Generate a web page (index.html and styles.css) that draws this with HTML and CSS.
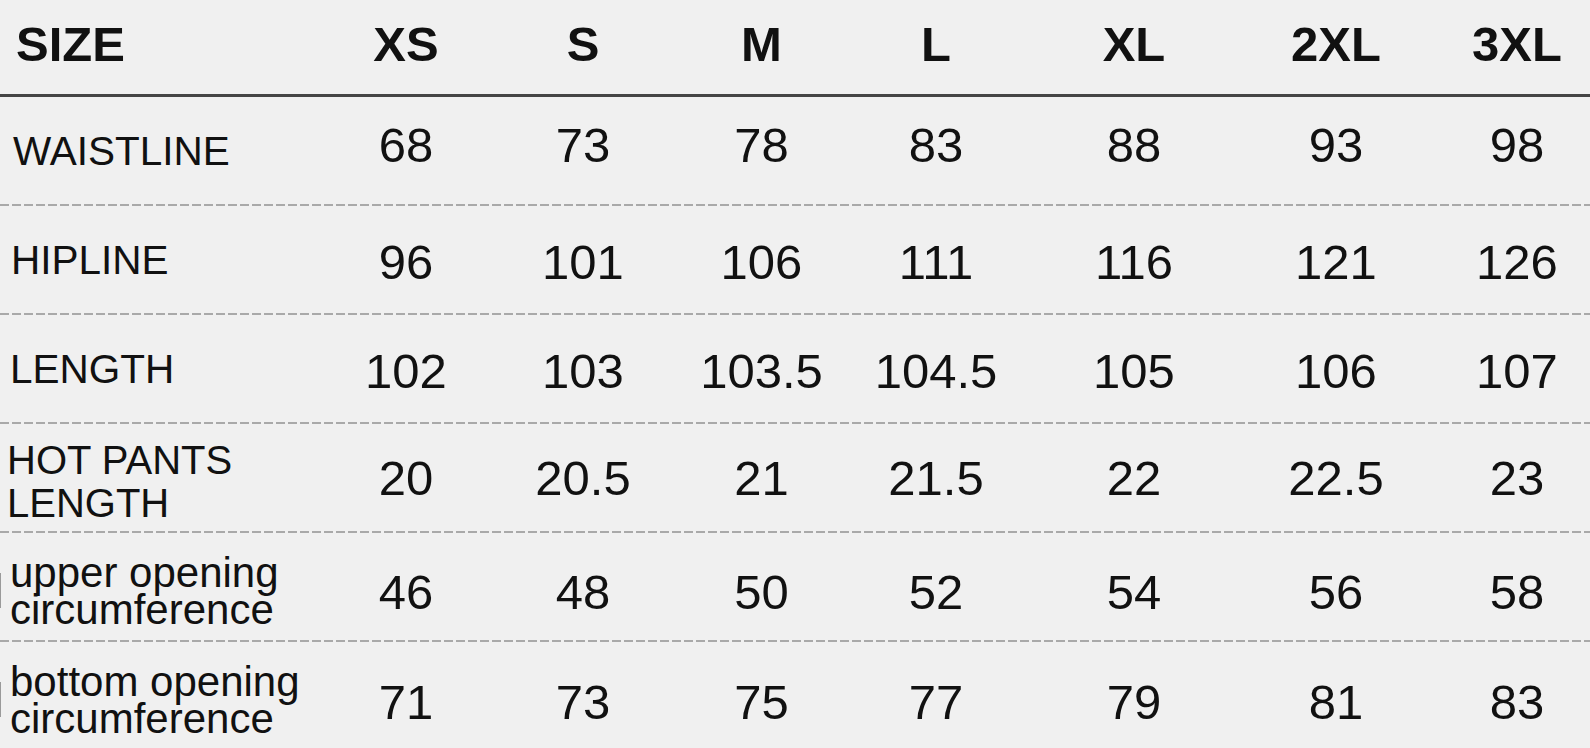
FILE: index.html
```html
<!DOCTYPE html>
<html lang="en">
<head>
<meta charset="utf-8">
<title>Size chart</title>
<link rel="stylesheet" href="styles.css">
</head>
<body>
<div class="chart">
  <div class="row head">
    <div class="label pad-size">SIZE</div>
    <div class="cell">XS</div><div class="cell">S</div><div class="cell">M</div><div class="cell">L</div><div class="cell">XL</div><div class="cell">2XL</div><div class="cell">3XL</div>
  </div>
  <div class="row up6">
    <div class="label pad-w">WAISTLINE</div>
    <div class="cell">68</div><div class="cell">73</div><div class="cell">78</div><div class="cell">83</div><div class="cell">88</div><div class="cell">93</div><div class="cell">98</div>
  </div>
  <div class="row down2">
    <div class="label pad-h">HIPLINE</div>
    <div class="cell">96</div><div class="cell">101</div><div class="cell">106</div><div class="cell">111</div><div class="cell">116</div><div class="cell">121</div><div class="cell">126</div>
  </div>
  <div class="row down2">
    <div class="label pad-l">LENGTH</div>
    <div class="cell">102</div><div class="cell">103</div><div class="cell">103.5</div><div class="cell">104.5</div><div class="cell">105</div><div class="cell">106</div><div class="cell">107</div>
  </div>
  <div class="row">
    <div class="label two pad-hp">HOT PANTS<br>LENGTH</div>
    <div class="cell">20</div><div class="cell">20.5</div><div class="cell">21</div><div class="cell">21.5</div><div class="cell">22</div><div class="cell">22.5</div><div class="cell">23</div>
  </div>
  <div class="row down5">
    <div class="label lower"><span class="mark"></span><span class="txt">upper opening<br>circumference</span></div>
    <div class="cell">46</div><div class="cell">48</div><div class="cell">50</div><div class="cell">52</div><div class="cell">54</div><div class="cell">56</div><div class="cell">58</div>
  </div>
  <div class="row last down6">
    <div class="label lower"><span class="mark"></span><span class="txt">bottom opening<br>circumference</span></div>
    <div class="cell">71</div><div class="cell">73</div><div class="cell">75</div><div class="cell">77</div><div class="cell">79</div><div class="cell">81</div><div class="cell">83</div>
  </div>
</div>
</body>
</html>
```
FILE: styles.css
```css
html, body {
  margin: 0;
  padding: 0;
  overflow: hidden;
  background: #f0f0f0;
}

body {
  width: 1590px;
  height: 748px;
  font-family: "Liberation Sans", Arial, sans-serif;
  color: #111;
}

.chart {
  width: 1609px;
  display: flex;
  flex-direction: column;
}

.row {
  display: grid;
  grid-template-columns: 318px 176px 178px 179px 170px 226px 178px 184px;
  align-items: center;
  height: 107px;
  padding-bottom: 2px;
  background: repeating-linear-gradient(to right, #a9a9a9 0 9px, transparent 9px 12px) left bottom / 100% 2px no-repeat;
}

.row.head {
  height: 87px;
  padding-bottom: 7px;
  border-bottom: 3px solid #454545;
  background: none;
  font-weight: bold;
}

.row.last {
  background-image: none;
}

.cell {
  text-align: center;
  font-size: 49px;
  line-height: 56px;
}

.up6 .cell { padding-bottom: 12px; }
.down2 .cell { padding-top: 4px; }
.down5 .cell { padding-top: 10px; }
.down6 .cell { padding-top: 12px; }

.label {
  font-size: 40.5px;
  line-height: 46px;
  padding-left: 12px;
  white-space: nowrap;
}

.head .label {
  font-size: 49px;
  line-height: 56px;
}

.pad-size { padding-left: 16px; }
.pad-w { padding-left: 13px; }
.pad-h { padding-left: 11px; }
.pad-l { padding-left: 10px; }
.pad-hp { padding-left: 7px; }

.label.two {
  font-size: 40px;
  line-height: 43px;
  padding-top: 8px;
}

.label.lower {
  display: flex;
  align-items: center;
  padding-left: 0;
  padding-top: 8px;
  font-size: 42px;
  line-height: 37px;
}

.mark {
  display: block;
  width: 1px;
  height: 35px;
  background: #9a9a9a;
  margin-right: 9px;
  flex: none;
}

.txt {
  display: block;
}
```
